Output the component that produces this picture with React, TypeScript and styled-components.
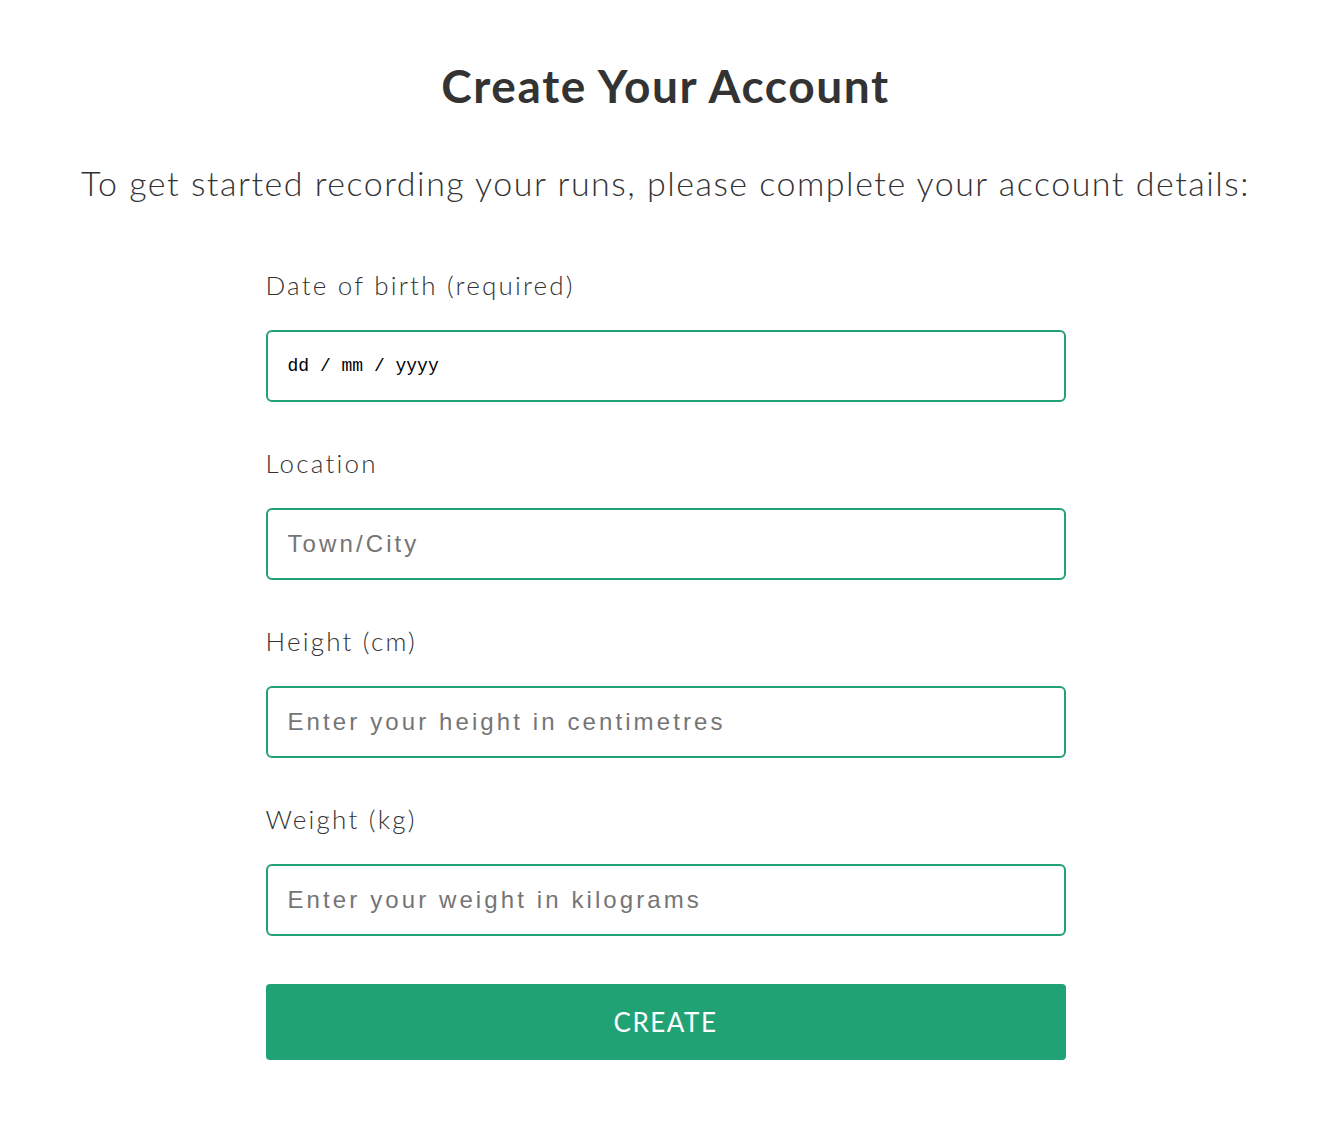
import React from "react";
import styled, { createGlobalStyle } from "styled-components";

const Global = createGlobalStyle`
  html, body { margin: 0; padding: 0; background: #fff; }
  body { font-family: Lato, "Noto Sans", sans-serif; color: #333; }
  * { box-sizing: border-box; }
`;

const Page = styled.main`
  display: flex;
  flex-direction: column;
  align-items: center;
  padding: 58px 0 0 3px;
`;

const Title = styled.h1`
  margin: 0;
  font-family: Lato, sans-serif;
  font-weight: 700;
  font-size: 46px;
  line-height: 56px;
  letter-spacing: 1.6px;
  color: #333;
`;

const Subtitle = styled.p`
  margin: 49px 0 0;
  font-family: Lato, sans-serif;
  font-weight: 300;
  font-size: 34px;
  line-height: 40px;
  letter-spacing: 1.5px;
  color: #333;
  white-space: nowrap;
`;

const Form = styled.form`
  width: 800px;
  display: flex;
  flex-direction: column;
  margin-top: 66px;
`;

const Field = styled.div`
  display: flex;
  flex-direction: column;
  margin-bottom: 45px;
`;

const Label = styled.label`
  font-family: Lato, sans-serif;
  font-weight: 300;
  font-size: 26px;
  line-height: 32px;
  letter-spacing: 2.2px;
  color: #333;
  margin-bottom: 29px;
`;

const Input = styled.input<{ $mono?: boolean }>`
  height: 72px;
  width: 100%;
  border: 2px solid #21a175;
  border-radius: 6px;
  padding: 0 20px;
  font-family: ${(p) => (p.$mono ? '"Liberation Mono", monospace' : '"Liberation Sans", Arial, sans-serif')};
  font-size: ${(p) => (p.$mono ? "18px" : "24px")};
  font-weight: 400;
  letter-spacing: ${(p) => (p.$mono ? "0" : "3.1px")};
  color: #000;
  outline: none;
  background: #fff;
  &::placeholder { color: ${(p) => (p.$mono ? "#000" : "#757575")}; opacity: 1; }
`;

const Button = styled.button`
  margin-top: 3px;
  height: 76px;
  width: 100%;
  border: none;
  border-radius: 4px;
  background: #21a275;
  color: #fff;
  font-family: Lato, sans-serif;
  font-weight: 400;
  font-size: 26px;
  letter-spacing: 1.5px;
  cursor: pointer;
`;

export default function App() {
  return (
    <>
      <Global />
      <Page>
        <Title>Create Your Account</Title>
        <Subtitle>To get started recording your runs, please complete your account details:</Subtitle>
        <Form onSubmit={(e) => e.preventDefault()}>
          <Field>
            <Label>Date of birth (required)</Label>
            <Input $mono placeholder="dd / mm / yyyy" />
          </Field>
          <Field>
            <Label>Location</Label>
            <Input placeholder="Town/City" />
          </Field>
          <Field>
            <Label>Height (cm)</Label>
            <Input placeholder="Enter your height in centimetres" />
          </Field>
          <Field>
            <Label>Weight (kg)</Label>
            <Input placeholder="Enter your weight in kilograms" />
          </Field>
          <Button type="submit">CREATE</Button>
        </Form>
      </Page>
    </>
  );
}
